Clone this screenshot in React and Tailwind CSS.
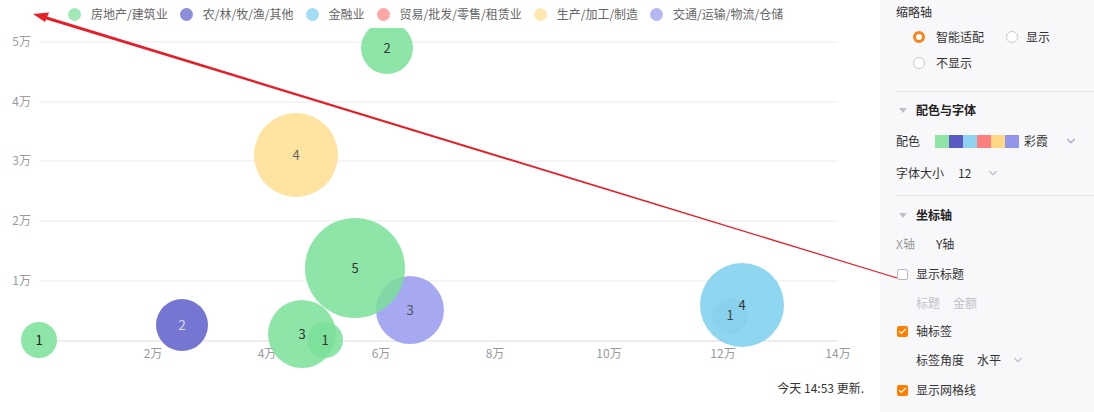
import React from 'react';
import { ChevronDown, Check } from 'lucide-react';

const legend = [
  { name: '房地产/建筑业', color: '#7ae099' },
  { name: '农/林/牧/渔/其他', color: '#5c5eca' },
  { name: '金融业', color: '#7bcfef' },
  { name: '贸易/批发/零售/租赁业', color: '#fe7f7f' },
  { name: '生产/加工/制造', color: '#ffde8f' },
  { name: '交通/运输/物流/仓储', color: '#9699ee' },
];

// bubbles: cx, cy (svg coords), r, color, label, label colour
const bubbles = [
  { x: 39, y: 312, r: 18, c: '#7ae099', t: '1', tc: '#222' },
  { x: 182, y: 297, r: 26, c: '#5c5eca', t: '2', tc: '#dde' },
  { x: 296, y: 127, r: 42, c: '#ffde8f', t: '4', tc: '#666' },
  { x: 387, y: 20, r: 26, c: '#7ae099', t: '2', tc: '#333' },
  { x: 410, y: 282, r: 34, c: '#9699ee', t: '3', tc: '#555' },
  { x: 355, y: 240, r: 50, c: '#7ae099', t: '5', tc: '#333' },
  { x: 302, y: 306, r: 34, c: '#7ae099', t: '3', tc: '#333' },
  { x: 325, y: 312, r: 18, c: '#7ae099', t: '1', tc: '#333' },
  { x: 742, y: 277, r: 42, c: '#7bcfef', t: '4', tc: '#333' },
];

const gridY = [14, 74, 133, 193, 253];
const yLabels = ['5万', '4万', '3万', '2万', '1万'];
const xTicks = [
  [153, '2万'],
  [267, '4万'],
  [381, '6万'],
  [495, '8万'],
  [609, '10万'],
  [723, '12万'],
  [838, '14万'],
];

const swatches = ['#8ee4a5', '#5b5bc5', '#8fd3f0', '#fe7f7f', '#fed886', '#9395ea'];

const Radio = ({ on }) =>
  on ? (
    <span className="block shrink-0 w-3 h-3 rounded-full border-[3px] border-[#fa8419] bg-white" />
  ) : (
    <span className="block shrink-0 w-3 h-3 rounded-full border border-[#c8c8cc] bg-white" />
  );

const Box = ({ on }) =>
  on ? (
    <span className="shrink-0 w-[11px] h-[11px] rounded-[2px] bg-[#ff8000] flex items-center justify-center">
      <Check size={9} strokeWidth={3} color="#fff" />
    </span>
  ) : (
    <span className="block shrink-0 w-[11px] h-[11px] rounded-[2px] border border-[#b8b8c0] bg-white" />
  );

const SectionHead = ({ children }) => (
  <div className="h-6 flex items-center">
    <span className="ml-[3px] w-0 h-0 border-l-[4px] border-r-[4px] border-t-[5px] border-l-transparent border-r-transparent border-t-[#c0c0c6]" />
    <span className="ml-[9px] font-bold text-[#222]">{children}</span>
  </div>
);

export default function App() {
  return (
    <div className="relative flex w-[1094px] h-[412px] bg-white text-xs font-['Noto_Sans_CJK_SC',sans-serif] leading-4 overflow-hidden whitespace-nowrap">
      {/* chart */}
      <div className="w-[880px] shrink-0 flex flex-col">
        <div className="h-7 flex items-center pl-[68px] gap-[12px] text-[#666]">
          {legend.map((l) => (
            <div key={l.name} className="flex items-center gap-[10px]">
              <span className="w-[13px] h-[13px] rounded-full opacity-70" style={{ background: l.color }} />
              <span>{l.name}</span>
            </div>
          ))}
        </div>
        <svg width="880" height="342" className="block">
          {gridY.map((y, i) => (
            <g key={y}>
              <line x1="39" x2="838" y1={y} y2={y} stroke="#ebebee" />
              <text x="31" y={y + 4} textAnchor="end" fontSize="12" fill="#9a9aa0">
                {yLabels[i]}
              </text>
            </g>
          ))}
          <line x1="39" x2="838" y1="313" y2="313" stroke="#dcdce0" />
          {xTicks.map(([x, t]) => (
            <text key={t} x={x} y="330" textAnchor="middle" fontSize="12" fill="#9a9aa0">
              {t}
            </text>
          ))}
          {bubbles.map((b, i) => (
            <circle key={i} cx={b.x} cy={b.y} r={b.r} fill={b.c} fillOpacity="0.85" />
          ))}
          <circle cx="730" cy="288" r="18" fill="#5fb8dd" fillOpacity="0.12" />
          {bubbles.map((b, i) => (
            <text key={'t' + i} x={b.x} y={b.y + 4.5} textAnchor="middle" fontSize="13" fill={b.tc}>
              {b.t}
            </text>
          ))}
          <text x="730" y="292" textAnchor="middle" fontSize="13" fill="#444">1</text>
        </svg>
        <div className="mt-[10px] pr-4 flex justify-end text-[#333]">今天 14:53 更新.</div>
      </div>

      {/* settings panel */}
      <div className="flex-1 bg-[#f8f8fa] text-[#333] pl-4">
        <div className="h-[92px] border-b border-[#e4e4e8]">
          <div className="h-6 flex items-center">缩略轴</div>
          <div className="h-[26px] flex items-center pl-[17px]">
            <Radio on />
            <span className="ml-[11px]">智能适配</span>
            <span className="ml-[22px]">
              <Radio />
            </span>
            <span className="ml-[8px]">显示</span>
          </div>
          <div className="h-[26px] flex items-center pl-[17px]">
            <Radio />
            <span className="ml-[11px]">不显示</span>
          </div>
        </div>

        <div className="h-[104px] pt-[6px] border-b border-[#e4e4e8]">
          <SectionHead>配色与字体</SectionHead>
          <div className="h-[38px] flex items-center">
            <span>配色</span>
            <div className="ml-[15px] flex shrink-0">
              {swatches.map((s) => (
                <span key={s} className="w-[14px] h-[13px]" style={{ background: s }} />
              ))}
            </div>
            <span className="ml-[5px]">彩霞</span>
            <ChevronDown size={14} className="ml-[16px] shrink-0 text-[#9aa8c4]" />
          </div>
          <div className="h-[26px] flex items-center">
            <span>字体大小</span>
            <span className="ml-[14px]">12</span>
            <ChevronDown size={14} className="ml-[15px] shrink-0 text-[#c0c0c8]" />
          </div>
        </div>

        <div className="pt-[7px]">
          <SectionHead>坐标轴</SectionHead>
          <div className="h-[34px] flex items-center">
            <span className="text-[#999]">X轴</span>
            <span className="ml-[21px]">Y轴</span>
          </div>
          <div className="h-[26px] flex items-center pl-px">
            <Box />
            <span className="ml-2">显示标题</span>
          </div>
          <div className="h-8 flex items-center pl-5 text-[#c2c2c8]">
            <span>标题</span>
            <span className="ml-[13px]">金额</span>
          </div>
          <div className="h-6 flex items-center pl-px">
            <Box on />
            <span className="ml-2">轴标签</span>
          </div>
          <div className="h-[34px] flex items-center pl-5">
            <span>标签角度</span>
            <span className="ml-[13px]">水平</span>
            <ChevronDown size={14} className="ml-[10px] shrink-0 text-[#c0c0c8]" />
          </div>
          <div className="h-[26px] flex items-center pl-px">
            <Box on />
            <span className="ml-2">显示网格线</span>
          </div>
        </div>
      </div>

      {/* red annotation arrow */}
      <svg className="absolute inset-0 pointer-events-none" width="1094" height="412">
        <polygon points="40.4,14.6 897.2,277.5 896.8,278.5 39.6,17.4" fill="#e61e28" />
        <polygon points="33,14 49,12.5 45,22" fill="#e61e28" />
      </svg>
    </div>
  );
}
